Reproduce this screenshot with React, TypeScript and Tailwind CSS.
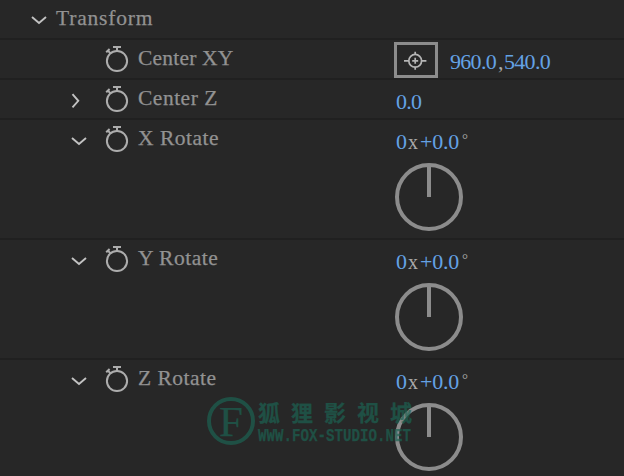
import React from "react";

interface RowProps {
  label: string;
  labelClass?: string;
  arrow?: "down" | "right";
  children?: React.ReactNode;
}

const Chevron = ({ direction }: { direction: "down" | "right" }) => (
  <svg width="16" height="16" viewBox="0 0 16 16" fill="none" stroke="#c2c2c2" strokeWidth="1.9">
    {direction === "down" ? <path d="M1 5 8 11 15 5" /> : <path d="M1.5 1.2 7.3 7.8 1.5 14.4" />}
  </svg>
);

const Stopwatch = () => (
  <svg width="24" height="28" viewBox="0 0 24 28" fill="none" stroke="#adadad">
    <circle cx="12" cy="16" r="10.1" strokeWidth="2" />
    <path d="M8 2h8M12 2v4" strokeWidth="2" />
    <path d="M1.2 7.2 4.6 4M3 5.8l2.8 2.8" strokeWidth="2" />
  </svg>
);

const Target = () => (
  <div className="flex h-9 w-11 items-center justify-center border-3 border-[#8c8c8c]">
    <svg width="24" height="20" viewBox="0 0 24 20" fill="none" stroke="#b5b5b5" strokeWidth="1.7">
      <circle cx="11.2" cy="10.8" r="6.4" />
      <path d="M0 10.8h5M17.4 10.8h5M11.2 1.8v3M11.2 16.8v3M8.2 10.8h6M11.2 7.8v6" />
    </svg>
  </div>
);

const Dial = () => (
  <svg className="block" width="70" height="70" viewBox="0 0 70 70" fill="none" stroke="#8c8c8c" strokeWidth="4">
    <circle cx="35" cy="35" r="32" />
    <path d="M35 4v31" />
  </svg>
);

// Label on the left, value column on the right
const Row = ({ label, labelClass = "tracking-[0.5px]", arrow, children }: RowProps) => (
  <div className="flex h-10 shrink-0">
    <div className="flex w-[105px] shrink-0 pt-[13px] pl-[71px]">
      {arrow && <Chevron direction={arrow} />}
    </div>
    <div className="w-[33px] shrink-0 pt-[5px]">
      <Stopwatch />
    </div>
    <div className={`w-[256px] shrink-0 pt-[4px] text-[21.5px] leading-7 ${labelClass}`}>{label}</div>
    <div className="flex pt-[8px] text-[22px] leading-7 tracking-[-0.7px] text-[#64a2e5] [-webkit-text-stroke:0]">
      {children}
    </div>
  </div>
);

const RotateRow = ({ label }: { label: string }) => (
  <div className="h-[120px] shrink-0 border-b-2 border-[#202020]">
    <Row label={label} arrow="down">
      <span className="w-[13px] pl-[2px]">0</span>
      <span className="w-[13px] pl-px text-[20px] text-[#aaaaaa]">x</span>
      <span className="w-[42px] tracking-[-0.2px]">+0.0</span>
      <span className="text-[15px] leading-[22px] text-[#aaaaaa]">°</span>
    </Row>
    <div className="pt-[2px] pl-[394px]">
      <Dial />
    </div>
  </div>
);

const Watermark = () => (
  <div className="absolute top-[397px] left-[207px] flex text-[#1d6252] opacity-70">
    <div className="flex size-[48px] items-center justify-center rounded-full border-4 border-[#1d6252] text-[43px] leading-none">
      F
    </div>
    <div className="pl-[3px]">
      <div className="h-[29px] font-['Noto_Sans_CJK_SC',sans-serif] text-[22px] leading-[29px] font-bold tracking-[11px] whitespace-nowrap">
        狐狸影视城
      </div>
      <div className="w-[196px] origin-top-left scale-x-[0.787] font-['Liberation_Mono',monospace] text-[18px] leading-5 font-bold">
        WWW.FOX-STUDIO.NET
      </div>
    </div>
  </div>
);

const App: React.FC = () => {
  return (
    <div className="relative flex h-[476px] w-[624px] flex-col overflow-hidden bg-[#272727] font-['Liberation_Serif',serif] text-[#929292] [-webkit-text-stroke:0.25px]">
      {/* Group header */}
      <div className="flex h-10 shrink-0 border-b-2 border-[#202020] pl-[31px]">
        <div className="w-[25px] pt-[12px]">
          <Chevron direction="down" />
        </div>
        <span className="pt-[4px] text-[21.5px] leading-7 tracking-[0.8px]">Transform</span>
      </div>

      <div className="h-10 shrink-0 border-b-2 border-[#202020]">
        <Row label="Center XY" labelClass="tracking-[0.2px]">
          <div className="-mt-[6px] w-[56px]">
            <Target />
          </div>
          <span className="w-[47px]">960.0</span>
          <span className="w-[7px] pl-px text-[#aaaaaa]">,</span>
          <span>540.0</span>
        </Row>
      </div>
      <div className="h-10 shrink-0 border-b-2 border-[#202020]">
        <Row label="Center Z" arrow="right">
          <span className="pl-[2px] tracking-[-0.7px]">0.0</span>
        </Row>
      </div>

      <RotateRow label="X Rotate" />
      <RotateRow label="Y Rotate" />
      <RotateRow label="Z Rotate" />

      <Watermark />
    </div>
  );
};

export default App;
